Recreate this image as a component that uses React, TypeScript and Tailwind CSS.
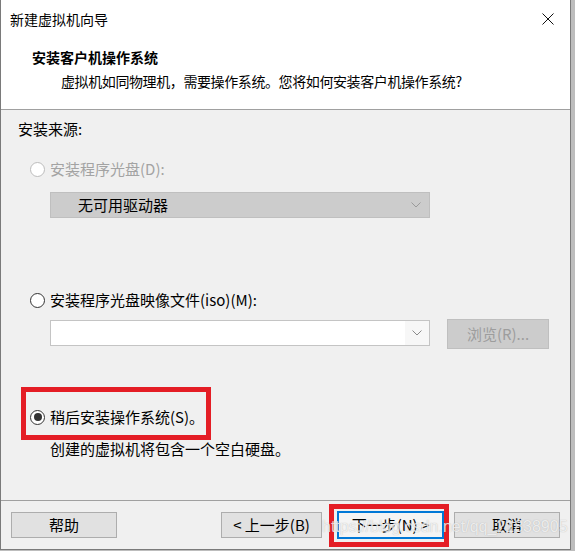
import React from "react";

const font = { fontFamily: '"Noto Sans CJK SC", "Noto Sans", sans-serif' };

function Radio({ checked = false, disabled = false }: { checked?: boolean; disabled?: boolean }) {
  return (
    <span
      className={
        "flex h-[15px] w-[15px] shrink-0 items-center justify-center rounded-full border bg-white " +
        (disabled ? "border-[#bcbcbc]" : "border-[#333333]")
      }
    >
      {checked && <span className="h-[8px] w-[8px] rounded-full bg-[#333333]" />}
    </span>
  );
}

function Chevron({ color }: { color: string }) {
  return (
    <svg width="10" height="6" viewBox="0 0 10 6" fill="none">
      <path d="M0.5 0.5 L5 5 L9.5 0.5" stroke={color} strokeWidth="1" />
    </svg>
  );
}

function Btn({ children }: { children: React.ReactNode }) {
  return (
    <div className="flex h-[26px] w-[106px] items-center justify-center border border-[#adadad] bg-[#e1e1e1] text-[15px] leading-[20px] text-black">
      {children}
    </div>
  );
}

export default function App() {
  return (
    <div className="relative flex h-[551px] w-[575px] overflow-hidden bg-[#bdbdbd]" style={font}>
      <div className="flex h-[550px] w-[571px] flex-col border-b border-l border-r border-[#7a7a7a] bg-[#f0f0f0]">
        {/* Title bar */}
        <div className="flex h-[38px] items-center justify-between bg-white pl-[9px] pr-[16px]">
          <span className="text-[14px] leading-[20px] text-black">新建虚拟机向导</span>
          <svg width="12" height="12" viewBox="0 0 12 12">
            <path d="M0.5 0.5 L11.5 11.5 M11.5 0.5 L0.5 11.5" stroke="#111" strokeWidth="1" />
          </svg>
        </div>
        {/* Header */}
        <div className="flex h-[72px] flex-col border-b border-[#a0a0a0] bg-white pl-[31px] pt-[9px]">
          <div className="text-[14px] font-bold leading-[20px] text-black">安装客户机操作系统</div>
          <div className="ml-[29px] mt-[4px] text-[14px] leading-[20px] tracking-[-0.4px] text-black">
            虚拟机如同物理机，需要操作系统。您将如何安装客户机操作系统?
          </div>
        </div>
        {/* Body */}
        <div className="flex h-[391px] flex-col border-b border-[#a0a0a0] pl-[17px]">
          <div className="mt-[9px] text-[15px] leading-[20px] text-black">安装来源:</div>

          <div className="ml-[12px] mt-[20px] flex h-[20px] items-center gap-[5px]">
            <Radio disabled />
            <span className="text-[15px] leading-[20px] text-[#a3a3a3]">安装程序光盘(D):</span>
          </div>
          <div className="ml-[32px] mt-[13px] flex h-[26px] w-[380px] items-center justify-between border border-[#bfbfbf] bg-[#cccccc] pl-[27px] pr-[8px]">
            <span className="text-[15px] leading-[20px] text-black">无可用驱动器</span>
            <Chevron color="#9a9a9a" />
          </div>

          <div className="ml-[12px] mt-[72px] flex h-[20px] items-center gap-[5px]">
            <Radio />
            <span className="text-[15px] leading-[20px] text-black">安装程序光盘映像文件(iso)(M):</span>
          </div>
          <div className="ml-[32px] mt-[9px] flex h-[30px] items-start">
            <div className="mt-[1px] flex h-[26px] w-[380px] border border-[#c4c4c4] bg-white">
              <div className="m-[1px] flex-1 bg-white" />
              <div className="flex w-[24px] items-center justify-center bg-[#f7f7f7]">
                <Chevron color="#8a8a8a" />
              </div>
            </div>
            <div className="ml-[17px] flex h-[30px] w-[102px] items-center justify-center border border-[#bfbfbf] bg-[#cccccc] text-[15px] leading-[20px] text-[#9d9d9d]">
              浏览(R)...
            </div>
          </div>

          <div className="ml-[12px] mt-[58px] flex h-[20px] items-center gap-[5px]">
            <Radio checked />
            <span className="text-[15px] leading-[20px] text-black">稍后安装操作系统(S)。</span>
          </div>
          <div className="ml-[32px] mt-[12px] text-[15px] leading-[20px] text-black">
            创建的虚拟机将包含一个空白硬盘。
          </div>
        </div>
        {/* Footer buttons */}
        <div className="flex pl-[10px] pt-[11px]">
          <Btn>帮助</Btn>
          <div className="ml-[104px] flex h-[26px] w-[101px] items-center justify-center border border-[#adadad] bg-[#e1e1e1] text-[15px] leading-[20px] text-black">
            &lt; 上一步(B)
          </div>
          <div className="ml-[15px] -mt-[1px] flex h-[28px] w-[107px] items-center justify-center border-2 border-[#0078d7] bg-[#f4f4f4] text-[15px] leading-[20px] text-black">
            下一步(N) &gt;
          </div>
          <div className="ml-[10px]">
            <Btn>取消</Btn>
          </div>
        </div>
      </div>

      {/* Annotation boxes */}
      <div className="pointer-events-none absolute left-[21px] top-[387px] h-[53px] w-[190px] border-[5px] border-[#e41d25]" />
      <div className="pointer-events-none absolute left-[329px] top-[504px] h-[43px] w-[120px] border-[5px] border-[#e41d25]" />

      {/* Watermark */}
      <div
        className="pointer-events-none absolute left-[322px] top-[517px] text-[16px] leading-[20px] text-white/75"
        style={{ fontFamily: '"Liberation Sans", Arial, sans-serif', textShadow: "0 0 1px rgba(120,120,120,0.5)" }}
      >
        https://blog.csdn.net/qq_21838905
      </div>
    </div>
  );
}
